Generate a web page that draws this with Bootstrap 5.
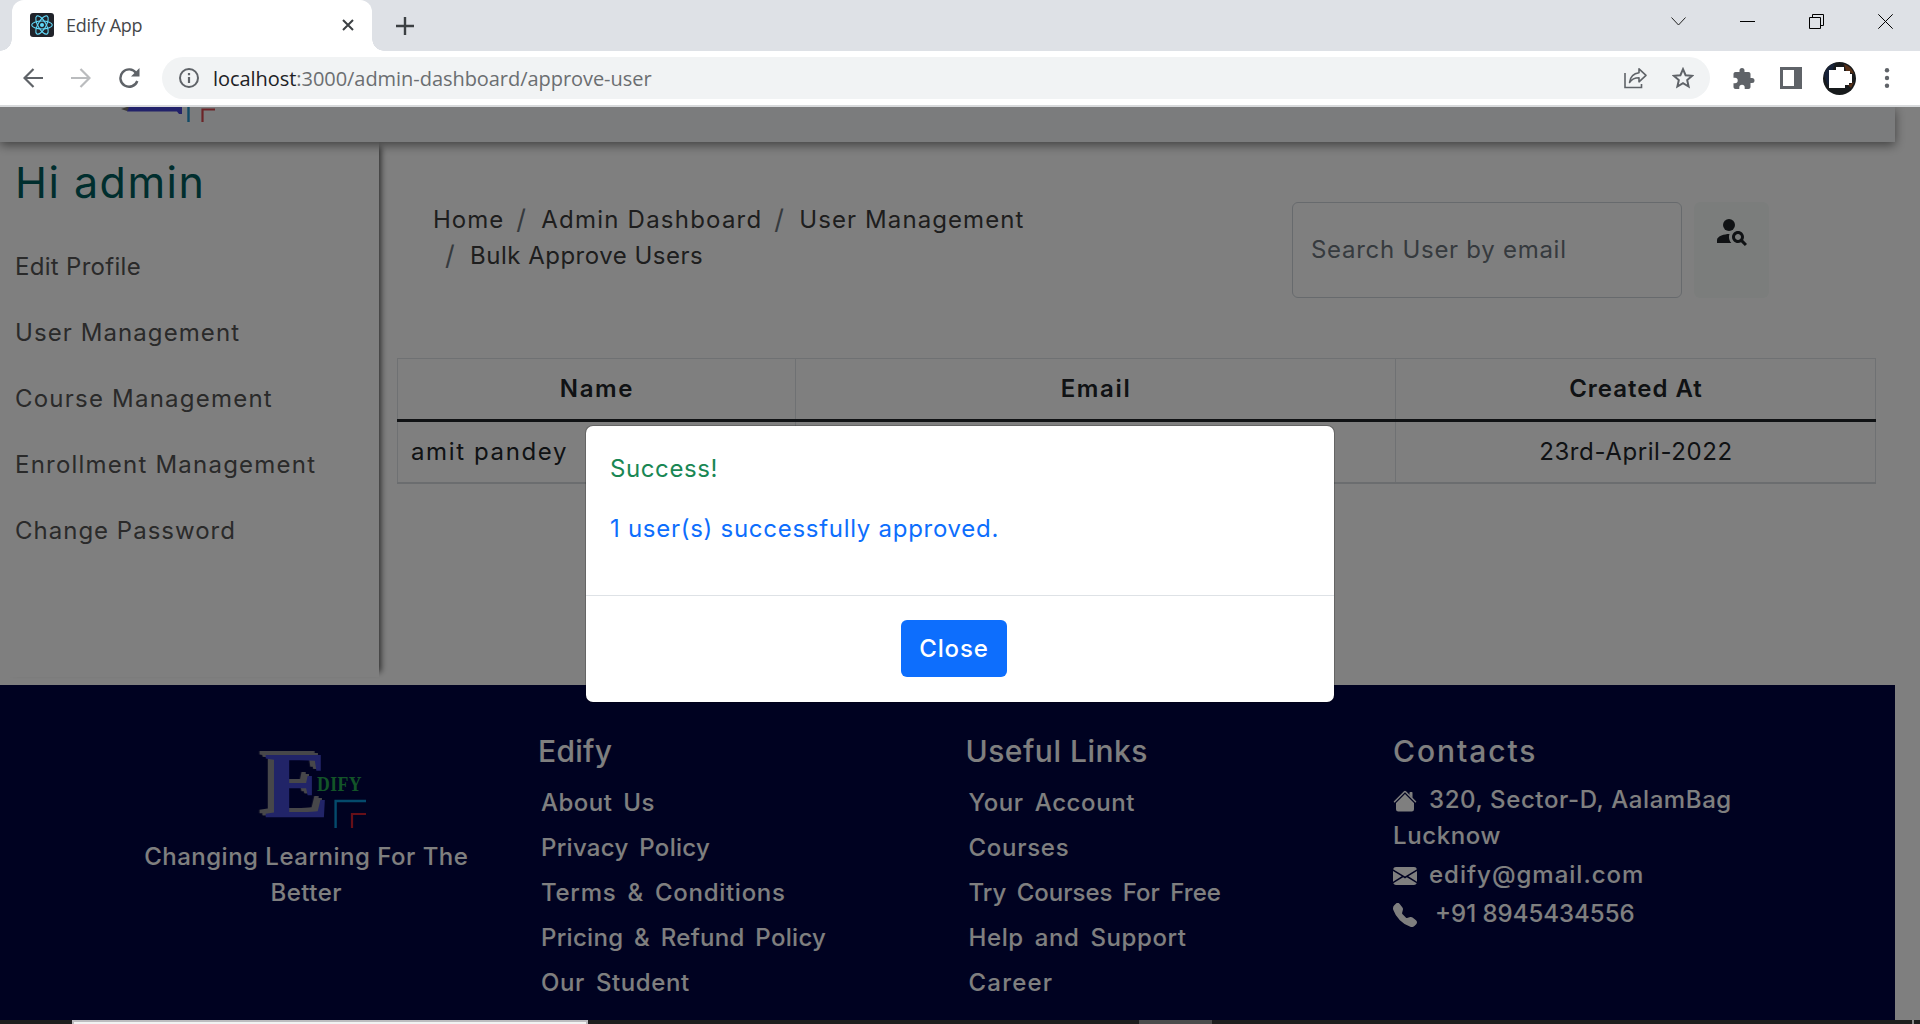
<!DOCTYPE html>
<html lang="en">
<head>
<meta charset="utf-8">
<title>Edify App</title>
<link href="https://cdn.jsdelivr.net/npm/bootstrap@5.3.0/dist/css/bootstrap.min.css" rel="stylesheet">
<style>
body{width:1920px;height:1024px;overflow:hidden;font-family:Inter,"Open Sans",sans-serif;font-size:24px;line-height:36px;color:#212529;background:#fff}
svg{flex:none}
.k0{letter-spacing:0}.k3{letter-spacing:.3px}.k5{letter-spacing:.5px}.k6{letter-spacing:.6px}.k7{letter-spacing:.72px}.k9{letter-spacing:.9px}
.k10{letter-spacing:1px}.k11{letter-spacing:1.08px}.k12{letter-spacing:1.22px}.k16{letter-spacing:1.62px}.k19{letter-spacing:1.92px}
.chrome-font{font-family:"Open Sans","Noto Sans",sans-serif}
/* browser frame */
.tab-strip{height:51px;background:#dee1e6;padding:0 27px 0 12px}
.tab-item{position:relative;width:360px;height:51px;background:#fff;border-radius:12px 12px 0 0;padding:0 18px 1px;font-size:18px;letter-spacing:-.27px;color:#45474a}
.tab-item::before,.tab-item::after{content:"";position:absolute;bottom:0;width:12px;height:12px}
.tab-item::before{left:-12px;background:radial-gradient(circle at 0 0,transparent 11.5px,#fff 12px)}
.tab-item::after{right:-12px;background:radial-gradient(circle at 100% 0,transparent 11.5px,#fff 12px)}
.tool-strip{height:56px;border-bottom:2px solid #d8dadc;padding:0 0 0 23px}
.address{width:1548px;height:42px;border-radius:21px;background:#f1f3f4;padding:0 16px 0 17px;font-size:20px;letter-spacing:-.05px;color:#6b6e71}
.address b{font-weight:400;color:#202124}
/* application */
.app-view{height:913px;overflow:hidden}
.app-page{width:1895px}
.top-bar{height:35px;background:#f6f8fa;box-shadow:0 3px 10px rgba(0,0,0,.5);z-index:2}
.top-bar svg{margin-left:120px}
.app-main{height:543px}
.side-nav{width:379px;height:535px;padding:15px 0 0 15px;box-shadow:7px 0 6px -5px rgba(0,0,0,.65)}
.side-nav h1{font-size:43px;line-height:50px;color:#005c5c;margin:0 0 42px;letter-spacing:1.5px}
.side-nav a{display:block;margin-bottom:30px;color:#555;text-decoration:none}
.content-col{width:1479px;margin-left:18px}
.crumb-row{padding:59px 107px 0 36px;height:216px}
.breadcrumb{width:640px;--bs-breadcrumb-item-padding-x:12px;margin:1px 0 0}
.breadcrumb-item{color:#3d3d3d}
.breadcrumb-item+.breadcrumb-item::before{width:25px;font-size:27px;letter-spacing:0;text-align:left;color:#6c757d}
.search-input{width:390px;height:96px;font-size:24px;padding:0 18px 2px;border:1px solid #ced4da;border-radius:6px;background:#fff;margin-top:1px}
.search-input::placeholder{color:#6c757d;opacity:1}
.search-btn{width:75px;height:96px;border-radius:6px;background:#f6fbf9;padding:10px 0 0;margin:1px 0 0 12px}
.user-table{height:126px;margin:0;table-layout:fixed;color:#212529;--bs-table-color:#212529;border-color:#dee2e6}
.user-table th,.user-table td{text-align:center;vertical-align:middle;padding:10px 12px 10px 13px}
.user-table th{font-weight:600;height:62px}
.user-table thead{border-bottom:3px solid #212529}
.user-table tbody{border-bottom:2px solid #d6dade}
.app-footer{height:335px;background:#000442;color:#fff;font-weight:500;padding:48px 92px 0 92.5px}
.foot-col{width:427.5px;padding:0 18px}
.foot-col h5{font-size:30px;line-height:36px;font-weight:500;margin:0 0 16px}
.foot-col a{display:block;margin:0 0 9px 3px;color:#fff;text-decoration:none;word-spacing:4px}
.contact-line svg{vertical-align:-5px;margin-right:12px}
.contact-line{margin-bottom:3px}
.logo-e{filter:drop-shadow(-3px -2px 0 #8f8f94) drop-shadow(-3px -2px 0 #8f8f94)}
/* modal */
.dim-layer{position:absolute;inset:107px 0 4px 0;background:rgba(0,0,0,.5);z-index:10}
.result-box{width:748px;height:276px;box-shadow:0 0 0 1px rgba(0,0,0,.2);border-radius:7px;background:#fff}
.result-box .modal-body{padding:25px 24px 24px}
.result-box .modal-body p{margin:0 0 24px}
.result-box .modal-footer{border-top:1px solid #dee2e6;padding:24px 12px 25px 0;height:107px}
.result-box .btn{width:106px;height:57px;font-size:24px;line-height:36px;font-weight:500;border-radius:6px;padding:1px 0 0;margin:0;background:#0d6efd;border:0}
/* taskbar edge */
.task-edge{height:4px;background:#1e1e1e;padding-left:72px}
.task-a{width:516px;height:4px;background:#f2f2f2;border:2px solid #bdbcbf;border-bottom:0}
.task-b{width:73px;height:4px;background:#4c4c4c;margin-left:551px}
.task-c{width:2px;height:4px;background:#8a8a8a;margin-left:700px}
</style>
<script src="https://cdn.jsdelivr.net/npm/bootstrap@5.3.0/dist/js/bootstrap.bundle.min.js"></script>
</head>
<body>
<div class="tab-strip d-flex align-items-center chrome-font">
  <div class="tab-item d-flex align-items-center">
    <svg width="24" height="24" viewBox="0 0 24 24"><rect width="24" height="24" rx="3" fill="#20232a"/><g fill="none" stroke="#61dafb" stroke-width="1.1"><ellipse cx="12" cy="12" rx="10.3" ry="4"/><ellipse cx="12" cy="12" rx="10.3" ry="4" transform="rotate(60 12 12)"/><ellipse cx="12" cy="12" rx="10.3" ry="4" transform="rotate(120 12 12)"/></g><circle cx="12" cy="12" r="2" fill="#61dafb"/></svg>
    <span style="margin-left:12px">Edify App</span>
    <svg class="ms-auto" width="12" height="12" viewBox="0 0 12 12"><path d="M1 1l10 10M11 1L1 11" stroke="#3c4043" stroke-width="2"/></svg>
  </div>
  <svg style="margin-left:24px" width="18" height="18" viewBox="0 0 18 18"><path d="M9 0v18M0 9h18" stroke="#3c4043" stroke-width="2.4"/></svg>
  <div class="d-flex align-items-center ms-auto" style="gap:54px;margin-top:-8px">
    <svg width="15" height="15" viewBox="0 0 15 15"><path d="M.5 3.500l7 7.500 7-7.500" fill="none" stroke="#222" stroke-width="1"/></svg>
    <svg width="15" height="15" viewBox="0 0 15 15"><path d="M0 7.500h15" stroke="#000"/></svg>
    <svg width="15" height="15" viewBox="0 0 15 15"><path d="M.5 3.500h11v11h-11zM3.500 3.500v-3h11v11h-3" fill="none" stroke="#000"/></svg>
    <svg width="15" height="15" viewBox="0 0 15 15"><path d="M.3.3l14.400 14.400M14.700.3L.3 14.700" stroke="#000"/></svg>
  </div>
</div>
<div class="tool-strip d-flex align-items-center chrome-font">
  <svg width="20" height="20" viewBox="0 0 20 20"><path d="M20 10H2M10.500 1L1.500 10l9 9" fill="none" stroke="#5f6368" stroke-width="2.200"/></svg>
  <svg style="margin-left:28px" width="20" height="20" viewBox="0 0 20 20"><path d="M0 10h18M9.500 1l9 9-9 9" fill="none" stroke="#babcbe" stroke-width="2.200"/></svg>
  <svg style="margin-left:28px" width="21" height="20" viewBox="0 0 21 20"><path d="M17.200 5A8.700 8.700 0 1 0 18.300 13" fill="none" stroke="#5f6368" stroke-width="2.400"/><path d="M20.500 0v8.500H12z" fill="#5f6368"/></svg>
  <div class="address d-flex align-items-center" style="margin-left:22px">
    <svg width="20" height="20" viewBox="0 0 20 20"><circle cx="10" cy="10" r="9" fill="none" stroke="#5f6368" stroke-width="2"/><path d="M10 9v6M10 5v2.300" stroke="#5f6368" stroke-width="2.200"/></svg>
    <span style="margin-left:14px;padding-top:2px"><b>localhost</b>:3000/admin-dashboard/approve-user</span>
    <svg class="ms-auto" width="23" height="22" viewBox="0 0 23 22"><path d="M1 6v14.500h16.500v-3.500" fill="none" stroke="#5f6368" stroke-width="1.600"/><path d="M15 1.800l7 6.500-7 6.500v-4c-4.500 0-7.300 1.500-9.500 4.700.7-5 3.500-9 9.500-9.700z" fill="none" stroke="#5f6368" stroke-width="1.600" stroke-linejoin="round"/></svg>
    <svg style="margin-left:25px" width="22" height="22" viewBox="0 0 22 22"><path d="M11 2.200l2.600 6 6.500.6-4.900 4.300 1.400 6.400-5.600-3.400-5.600 3.400 1.400-6.400L1.900 8.800l6.500-.6z" fill="none" stroke="#5f6368" stroke-width="2"/></svg>
  </div>
  <svg style="margin-left:22px" width="23" height="23" viewBox="1 0 22 23"><path fill="#5f6368" d="M20.500 11H19V7c0-1.100-.9-2-2-2h-4V3.500a2.500 2.500 0 0 0-5 0V5H4c-1.100 0-2 .9-2 2v3.800h1.500a2.700 2.700 0 0 1 0 5.400H2V20c0 1.100.9 2 2 2h3.800v-1.500a2.700 2.700 0 0 1 5.400 0V22H17c1.100 0 2-.9 2-2v-4h1.500a2.500 2.500 0 0 0 0-5z"/></svg>
  <svg style="margin-left:25px" width="22" height="22" viewBox="0 0 22 22"><path fill="#5f6368" fill-rule="evenodd" d="M0 0h22v22H0zM3 3v16h11V3z"/></svg>
  <svg style="margin-left:21px" width="33" height="33" viewBox="0 0 33 33"><circle cx="16.500" cy="16.500" r="16.500" fill="#171a1c"/><path d="M1 13A16 16 0 0 1 12 1l-3 9-4 14z" fill="#172238"/><path d="M21 2q8 3 10 10l-8-3zM25 23l6-3-3 6z" fill="#563018"/><path d="M6 8h7V5h8v4h6v3h2v9h-3v2h-4v3H6z" fill="#fff"/></svg>
  <svg style="margin-left:28px" width="6" height="20" viewBox="0 0 6 20"><g fill="#5f6368"><circle cx="3" cy="2.300" r="2.200"/><circle cx="3" cy="10" r="2.200"/><circle cx="3" cy="17.700" r="2.200"/></g></svg>
</div>

<div class="app-view">
  <div class="app-page">
    <header class="top-bar position-relative">
      <!-- lower edge of the scrolled brand mark -->
      <svg class="d-block" width="100" height="16" viewBox="120 107 100 16">
        <path d="M121 109l6-2h4v3l-4 1z" fill="#77736e"/>
        <path d="M129 107h53v7h-3l-2-2.500H127z" fill="#4444d4"/>
        <path d="M188.500 107v15" stroke="#2296cc" stroke-width="2.400"/>
        <path d="M202.500 122v-12.500h12.500" fill="none" stroke="#d8494e" stroke-width="2.200"/>
      </svg>
    </header>
    <div class="app-main d-flex">
      <nav class="side-nav">
        <h1 class="fw-normal">Hi admin</h1>
        <a class="k3">Edit Profile</a>
        <a class="k11">User Management</a>
        <a class="k12">Course Management</a>
        <a class="k12">Enrollment Management</a>
        <a class="k10">Change Password</a>
      </nav>
      <main class="content-col">
        <div class="crumb-row d-flex justify-content-between align-items-start">
          <ol class="breadcrumb">
            <li class="breadcrumb-item k10">Home</li>
            <li class="breadcrumb-item k12">Admin Dashboard</li>
            <li class="breadcrumb-item k11">User Management</li>
            <li class="breadcrumb-item k5">Bulk Approve Users</li>
          </ol>
          <div class="d-flex">
            <input class="form-control search-input k7" placeholder="Search User by email">
            <button class="btn search-btn d-flex justify-content-center align-items-start">
              <svg width="36" height="36" viewBox="0 0 24 24" fill="#212529"><circle cx="10" cy="8" r="4"/><path d="M10.350 14.010C7.620 13.910 2 15.270 2 18v2h9.540c-2.470-2.760-1.230-5.890-1.190-5.990zM19.430 18.020c.36-.59.57-1.280.57-2.020 0-2.210-1.790-4-4-4s-4 1.790-4 4 1.790 4 4 4c.74 0 1.430-.22 2.020-.57L20.590 22 22 20.590zM16 18c-1.100 0-2-.9-2-2s.9-2 2-2 2 .9 2 2-.9 2-2 2z"/></svg>
            </button>
          </div>
        </div>
        <table class="table table-bordered user-table">
          <colgroup><col style="width:398px"><col style="width:600px"><col></colgroup>
          <thead><tr><th class="k16">Name</th><th class="k16">Email</th><th class="k10">Created At</th></tr></thead>
          <tbody><tr><td class="text-start k16">amit pandey</td><td></td><td class="k6">23rd-April-2022</td></tr></tbody>
        </table>
      </main>
    </div>
    <footer class="app-footer d-flex">
      <div class="foot-col text-center k5">
        <svg class="d-block" style="margin:7px 0 4px 139px" width="125" height="95" viewBox="0 0 125 95">
          <g font-family="Liberation Serif,serif" font-weight="700">
            <text class="logo-e" transform="translate(14 77.500) scale(1.040 1)" font-size="95" fill="#4248d0">E</text>
            <text x="67" y="50.700" font-size="20" fill="#26a850" textLength="45" lengthAdjust="spacingAndGlyphs">DIFY</text>
          </g>
          <path d="M85.600 88V61h30.400" fill="none" stroke="#0894d8" stroke-width="2.400"/>
          <path d="M102 88V74h14" fill="none" stroke="#cc1e30" stroke-width="2.200"/>
        </svg>
        Changing Learning For The Better
      </div>
      <div class="foot-col">
        <h5 class="k3">Edify</h5>
        <a class="k5">About Us</a><a class="k3">Privacy Policy</a><a class="k7">Terms &amp; Conditions</a><a class="k3">Pricing &amp; Refund Policy</a><a class="k6">Our Student</a>
      </div>
      <div class="foot-col">
        <h5 class="k5">Useful Links</h5>
        <a class="k6">Your Account</a><a class="k7">Courses</a><a class="k0">Try Courses For Free</a><a class="k6">Help and Support</a><a class="k12">Career</a>
      </div>
      <div class="foot-col">
        <h5 class="k19" style="margin-bottom:13px">Contacts</h5>
        <div class="contact-line k6"><svg width="24" height="24" viewBox="0 0 16 16" fill="#fff"><path d="m8 3.293 6 6V13.500a1.500 1.500 0 0 1-1.500 1.500h-9A1.500 1.500 0 0 1 2 13.500V9.293zm5-.793V6l-2-2V2.500a.5.5 0 0 1 .5-.5h1a.5.5 0 0 1 .5.5z"/><path d="M7.293 1.500a1 1 0 0 1 1.414 0l6.647 6.646a.5.5 0 0 1-.708.708L8 2.207 1.354 8.854a.5.5 0 1 1-.708-.708z"/></svg>320, Sector-D, AalamBag<br>Lucknow</div>
        <div class="contact-line k10"><svg width="24" height="24" viewBox="0 0 16 16" fill="#fff"><path d="M.05 3.555A2 2 0 0 1 2 2h12a2 2 0 0 1 1.950 1.555L8 8.414zM0 4.697v7.104l5.803-3.558zM6.761 8.830l-6.570 4.027A2 2 0 0 0 2 14h12a2 2 0 0 0 1.808-1.144l-6.570-4.027L8 9.586zm3.436-.586L16 11.801V4.697z"/></svg>edify@gmail.com</div>
        <div class="contact-line k0"><svg style="margin-right:18px" width="24" height="24" viewBox="0 0 16 16" fill="#fff"><path d="M1.885.511a1.745 1.745 0 0 1 2.610.163L6.290 2.980c.329.423.445.974.315 1.494l-.547 2.190a.678.678 0 0 0 .178.643l2.457 2.457a.678.678 0 0 0 .644.178l2.189-.547a1.745 1.745 0 0 1 1.494.315l2.306 1.794c.829.645.905 1.870.163 2.611l-1.034 1.034c-.74.740-1.846 1.065-2.877.702a18.634 18.634 0 0 1-7.010-4.420 18.634 18.634 0 0 1-4.420-7.009c-.362-1.030-.037-2.137.703-2.877z"/></svg>+91 8945434556</div>
      </div>
    </footer>
  </div>
</div>
<div class="task-edge d-flex"><div class="task-a"></div><div class="task-b"></div><div class="task-c"></div></div>

<div class="dim-layer d-flex justify-content-center align-items-center">
  <div class="result-box d-flex flex-column">
    <div class="modal-body">
      <p class="text-success k6">Success!</p>
      <p class="k7 text-primary">1 user(s) successfully approved.</p>
    </div>
    <div class="modal-footer d-flex justify-content-center"><button class="btn btn-primary k9">Close</button></div>
  </div>
</div>
</body>
</html>
